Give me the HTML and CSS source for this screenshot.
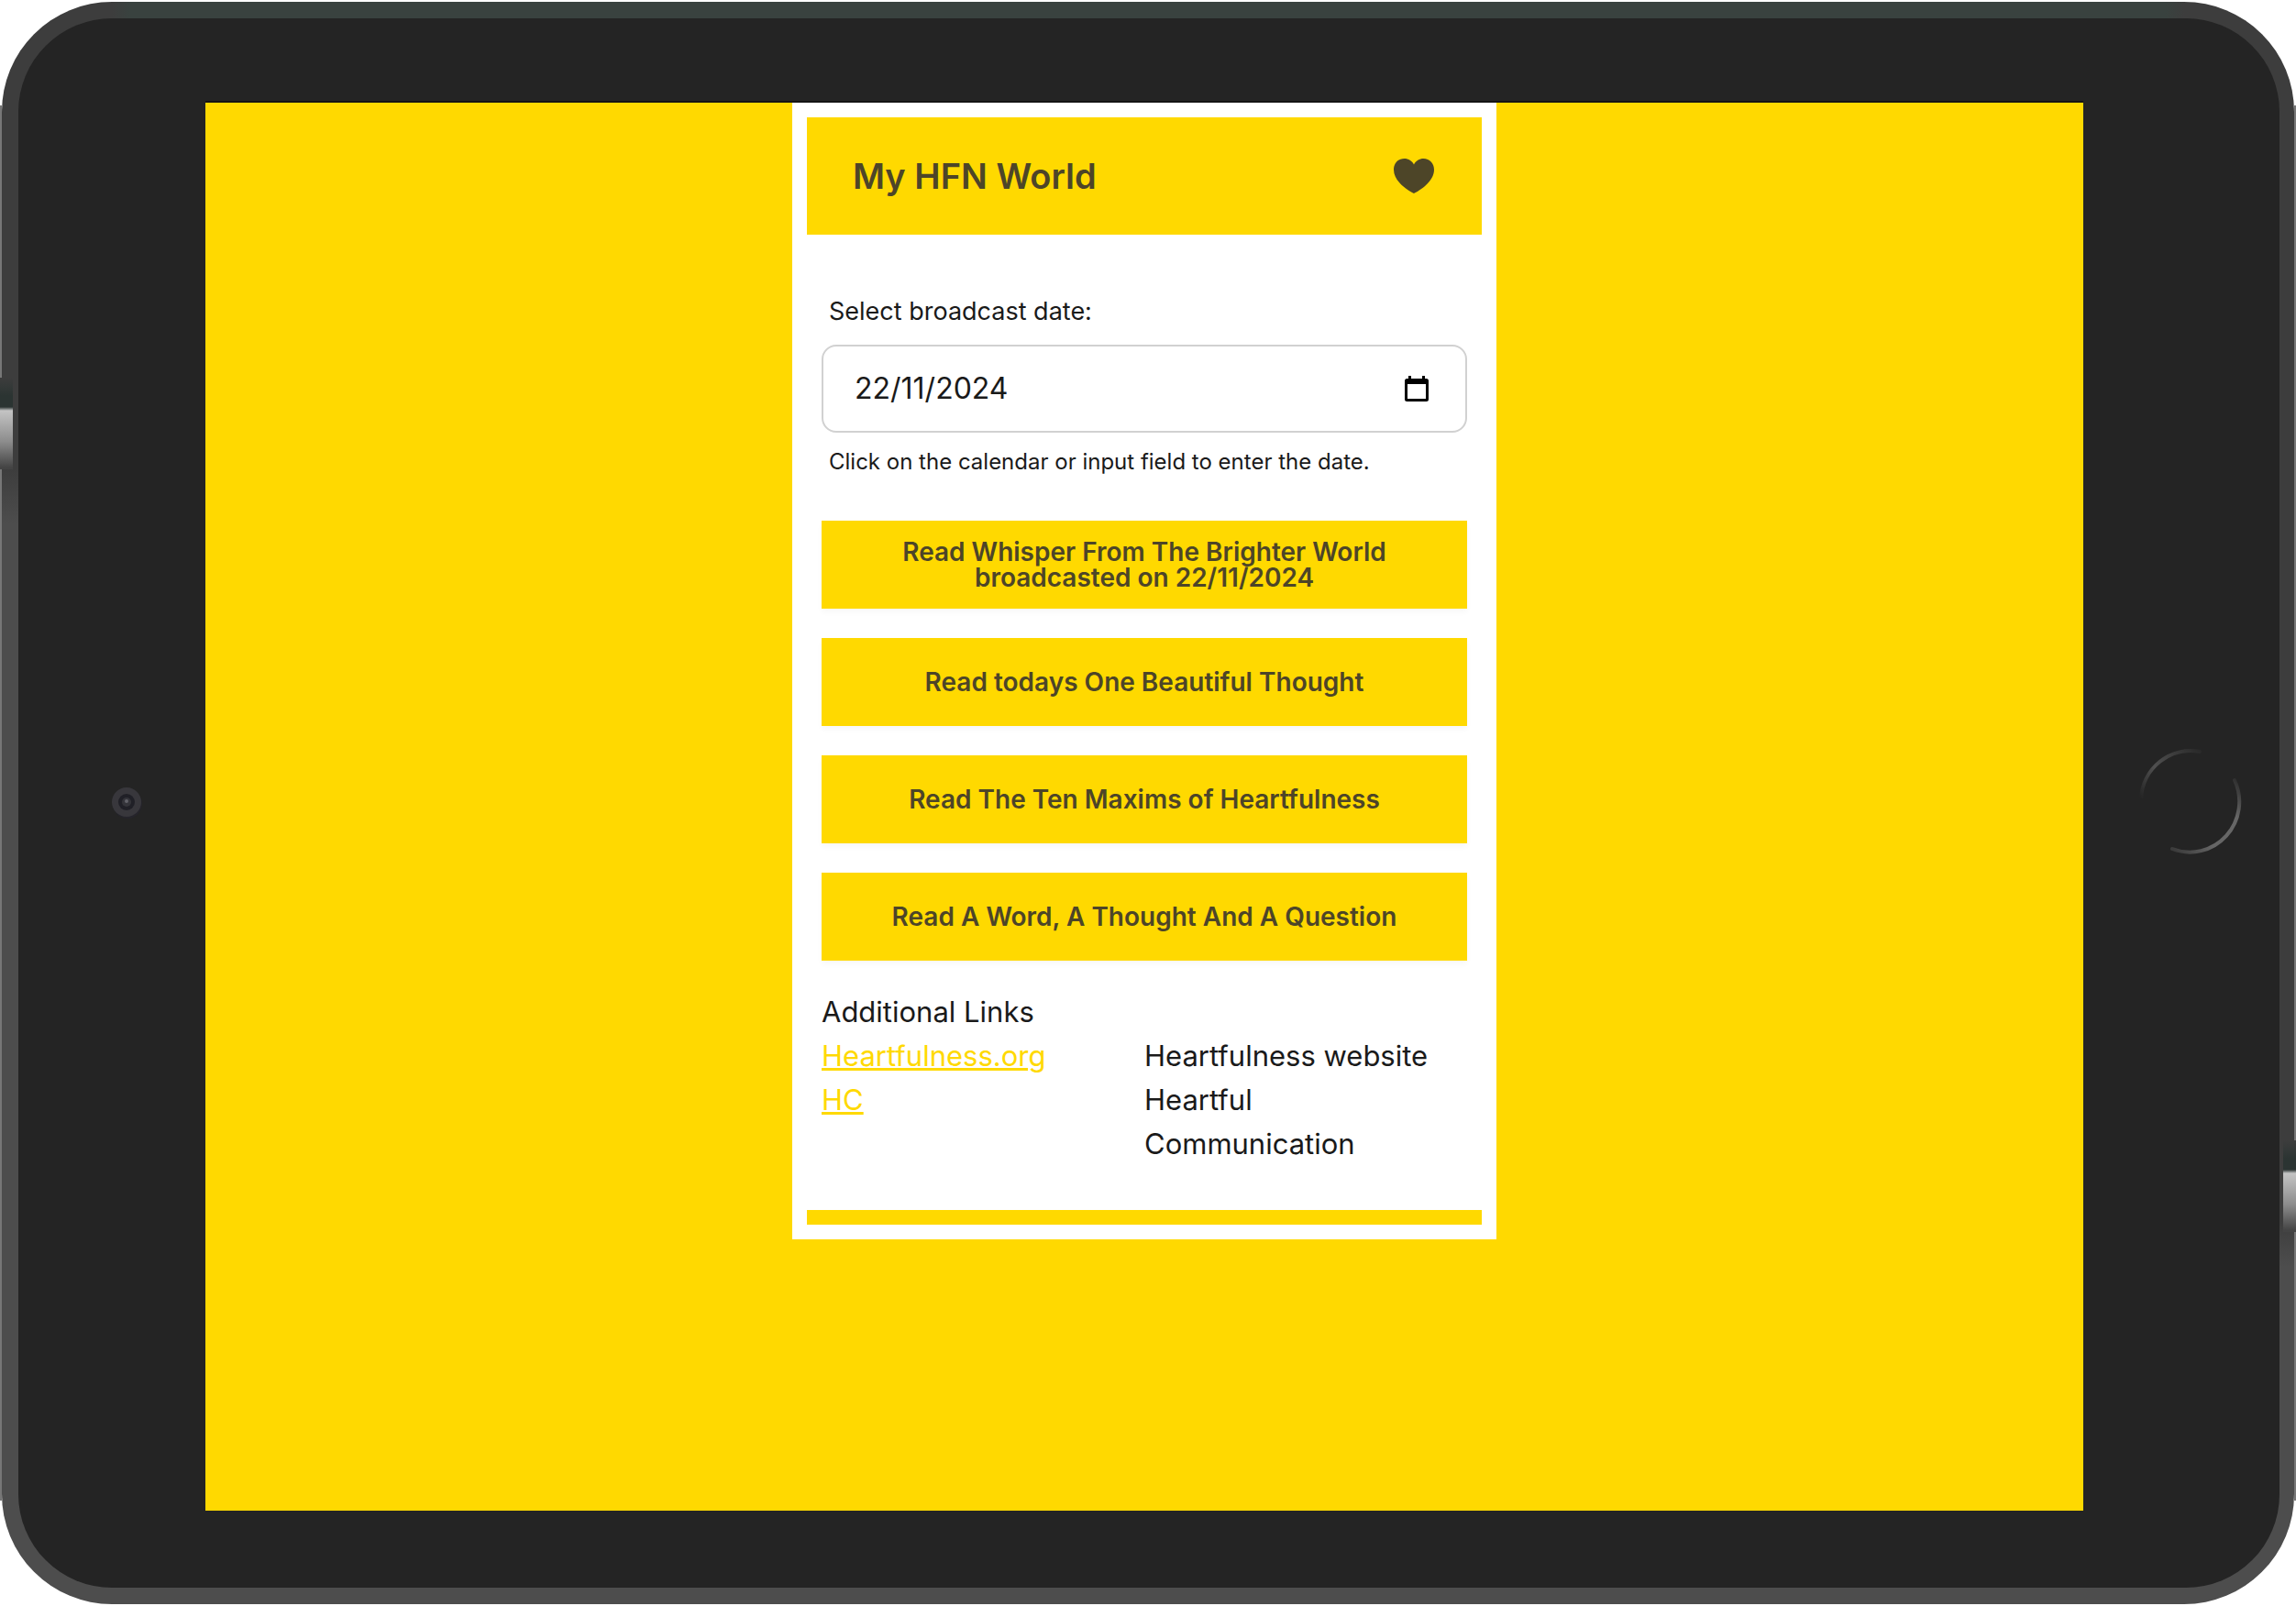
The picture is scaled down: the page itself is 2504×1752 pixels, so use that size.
FILE: index.html
```html
<!DOCTYPE html>
<html lang="en-GB">
<head>
<meta charset="utf-8">
<title>My HFN World</title>
<meta name="viewport" content="width=device-width, initial-scale=1">
<link rel="stylesheet" href="styles.css">
</head>
<body>
<div class="stage">
  <div class="device">
    <div class="bezel">
      <svg class="camera" viewBox="0 0 36 36" aria-hidden="true">
        <circle cx="19" cy="20" r="16" fill="#25242b"/>
        <circle cx="18" cy="18" r="16" fill="#38373c"/>
        <circle cx="18" cy="18" r="9" fill="#202027"/>
        <circle cx="18" cy="18" r="5" fill="#34343a"/>
        <circle cx="18" cy="17" r="2" fill="#63636a"/>
      </svg>
      <main class="screen">
        <div class="card">
          <header class="header">
            <h1 class="title">My HFN World</h1>
            <svg class="heart" viewBox="0 0 44 38" aria-hidden="true">
              <path d="M22 38C15 34.500 0 25 0 12C0 5 5 0 11.500 0C16 0 20 2.500 22 6.500C24 2.500 28 0 32.500 0C39 0 44 5 44 12C44 25 29 34.500 22 38Z" fill="#4d4528"/>
            </svg>
          </header>
          <div class="content">
            <form class="form">
              <label class="label" for="date">Select broadcast date:</label>
              <div class="field">
                <input class="date" id="date" type="text" value="22/11/2024" aria-describedby="date-help">
                <button class="picker" type="button" aria-label="Open calendar">
                  <svg class="calendar" viewBox="0 0 26 28" aria-hidden="true">
                    <path fill-rule="evenodd" d="M4 0H7V3H19V0H22V3H23.500Q26 3 26 5.500V25.500Q26 28 23.500 28H2.500Q0 28 0 25.500V5.500Q0 3 2.500 3H4ZM3 9V25H23V9Z" fill="#000"/>
                  </svg>
                </button>
              </div>
              <p class="help" id="date-help">Click on the calendar or input field to enter the date.</p>
            </form>
            <div class="actions">
              <button class="action" type="button">Read Whisper From The Brighter World<br>broadcasted on 22/11/2024</button>
              <button class="action" type="button">Read todays One Beautiful Thought</button>
              <button class="action" type="button">Read The Ten Maxims of Heartfulness</button>
              <button class="action" type="button">Read A Word, A Thought And A Question</button>
            </div>
            <table class="links">
              <caption>Additional Links</caption>
              <tbody>
                <tr><td><a href="#heartfulness">Heartfulness.org</a></td><td>Heartfulness website</td></tr>
                <tr><td><a href="#hc">HC</a></td><td>Heartful Communication</td></tr>
              </tbody>
            </table>
          </div>
          <footer class="footer"></footer>
        </div>
      </main>
      <svg class="home" viewBox="0 0 112 116" fill="none" stroke-width="4" stroke-linecap="round" aria-hidden="true">
        <defs>
          <linearGradient id="upper" gradientUnits="userSpaceOnUse" x1="2" y1="54" x2="66" y2="2">
            <stop offset="0" stop-color="#242424"/><stop offset=".4" stop-color="#505050"/><stop offset="1" stop-color="#2a2a2a"/>
          </linearGradient>
          <linearGradient id="lower" gradientUnits="userSpaceOnUse" x1="108" y1="32" x2="36" y2="108">
            <stop offset="0" stop-color="#2a2a2a"/><stop offset=".3" stop-color="#666"/><stop offset=".7" stop-color="#666"/><stop offset="1" stop-color="#3c3c3c"/>
          </linearGradient>
        </defs>
        <path d="M2 54A54 55 0 0 1 66 3" stroke="url(#upper)"/>
        <path d="M104 34A54 55 0 0 1 36 109" stroke="url(#lower)"/>
      </svg>
    </div>
  </div>
</div>
</body>
</html>
```
FILE: styles.css
```css
* {
  box-sizing: border-box;
}

body {
  margin: 0;
  background: #fff;
  color: #1a1a1a;
  font-family: Inter, "Liberation Sans", sans-serif;
  font-size: 31px;
  line-height: 48px;
}

/* Tablet frame */
.stage {
  position: relative;
  display: flex;
  min-height: 100vh;
  padding: 2px;
  background:
    linear-gradient(#777, #777) left center / 2px calc(100% - 230px) no-repeat,
    linear-gradient(#777, #777) right center / 2px calc(100% - 230px) no-repeat;
}

.stage::before,
.stage::after {
  content: "";
  position: absolute;
  width: 14px;
  height: 100px;
  background: linear-gradient(#3d3d3d, #2b3432 20px 32px, #c4c4c4 36px, #8c8c8c 70px, #444 98px);
}

.stage::before {
  top: 412px;
  left: 0;
}

.stage::after {
  top: 1244px;
  right: 0;
}

.device {
  display: flex;
  flex: 1;
  padding: 18px 16px 18px 18px;
  border-radius: 120px;
  background:
    linear-gradient(90deg, transparent 120px, #39423f 140px calc(100% - 140px), transparent calc(100% - 120px)) top / 100% 18px no-repeat,
    linear-gradient(#3d3d3d 510px, #4d4d4d 570px) left / 50% 100% no-repeat,
    linear-gradient(#3d3d3d 1330px, #4d4d4d 1380px) right / 50% 100% no-repeat;
}

.bezel {
  display: grid;
  flex: 1;
  grid-template-columns: 204px 1fr 214px;
  align-items: center;
  justify-items: center;
  padding: 92px 0 84px;
  border-radius: 102px;
  background: #242424;
}

.camera,
.home {
  margin-bottom: 10px;
}

.camera {
  width: 36px;
  height: 36px;
  margin-left: 32px;
}

.home {
  width: 112px;
  height: 116px;
  margin-left: 20px;
}

.screen {
  align-self: stretch;
  justify-self: stretch;
  background: #ffd900;
  box-shadow: 0 -2px #141414;
}

/* Card */
.card {
  max-width: 768px;
  margin: 0 auto;
  padding: 16px;
  background: #fff;
}

.header {
  display: flex;
  align-items: center;
  justify-content: space-between;
  height: 128px;
  padding: 0 52px 0 50px;
  background: #ffd900;
}

.title {
  margin: 0;
  color: #4d4528;
  font-size: 38px;
  font-weight: 600;
}

.heart {
  width: 44px;
  height: 38px;
}

.content {
  padding: 64px 16px 48px;
}

.label,
.help {
  display: block;
  margin: 0;
  padding: 0 8px;
}

.label {
  font-size: 27px;
  line-height: 40px;
}

.help {
  font-size: 24px;
  line-height: 32px;
}

.field {
  display: flex;
  align-items: center;
  height: 96px;
  margin: 16px 0;
  padding: 0 40px 0 34px;
  border: 2px solid #d1d1d1;
  border-radius: 16px;
}

.date {
  flex: 1;
  min-width: 0;
  padding: 0;
  border: 0;
  background: none;
  color: inherit;
  font: inherit;
  font-size: 32px;
}

.picker {
  display: flex;
  padding: 0;
  border: 0;
  background: none;
}

.calendar {
  width: 26px;
  height: 28px;
}

.actions {
  display: grid;
  gap: 32px;
  margin: 48px 0 32px;
}

.action {
  min-height: 96px;
  padding: 0 32px;
  border: 0;
  background: #ffd900;
  box-shadow: 0 4px 6px rgba(0, 0, 0, .03);
  color: #4d4528;
  font-family: inherit;
  font-size: 28px;
  font-weight: 600;
  line-height: 28px;
}

.links {
  width: 100%;
  table-layout: fixed;
  border-collapse: collapse;
}

.links caption {
  text-align: left;
}

.links td {
  padding: 0;
  vertical-align: top;
}

.links a {
  color: #ffd900;
  text-decoration-thickness: 3px;
}

.footer {
  height: 16px;
  background: #ffd900;
}
```
